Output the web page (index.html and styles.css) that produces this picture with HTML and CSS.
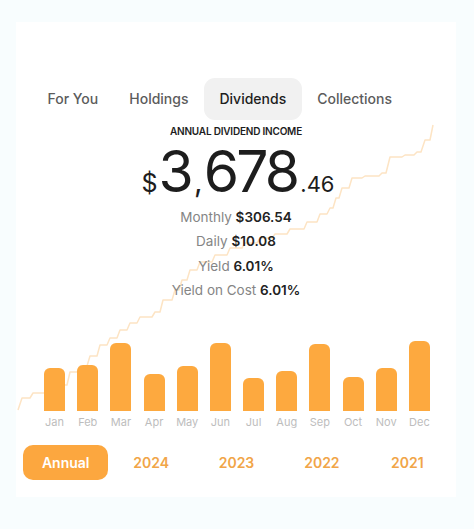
FILE: index.html
```html
<!DOCTYPE html>
<html lang="en">
<head>
  <meta charset="UTF-8" />
  <meta name="viewport" content="width=device-width, initial-scale=1.0"/>
  <title>Dividends</title>
  <link rel="stylesheet" href="styles.css">
</head>
<body>
  <div class="card">
    <!-- cumulative income step line, drawn behind everything -->
    <svg class="trend" viewBox="16 22 440 475" width="440" height="475">
      <polyline points="18,410 22,398 30,398 33,393 44,393 57,393 60,385 67,385 70,372 77,372 80,366 87,366 90,356 97,356 100,345 107,345 110,338 117,338 120,330 127,330 130,323 137,323 140,317 152,317 155,312 160,312 163,300 172,300 175,290 179,290 182,280 187,280 190,270 197,270 200,262 212,262 215,255 227,255 230,248 242,248 245,243 257,243 260,238 272,238 275,234 287,234 290,229 304,229 307,222 317,222 320,214 327,214 330,208 333,208 336,198 339,198 342,188 349,188 352,178 362,178 365,176 379,176 382,173 386,173 390,157 402,157 405,155 414,155 417,152 421,152 425,140 430,140 433,125" />
    </svg>

    <nav class="tabs">
      <span class="tab">For You</span>
      <span class="tab">Holdings</span>
      <span class="tab active">Dividends</span>
      <span class="tab">Collections</span>
    </nav>

    <div class="summary">
      <div class="label">ANNUAL DIVIDEND INCOME</div>
      <div class="total">
        <span class="cur">$</span><span class="whole">3<span class="comma">,</span>678</span><span class="cents">.46</span>
      </div>
      <ul class="stats">
        <li>Monthly <strong>$306.54</strong></li>
        <li>Daily <strong>$10.08</strong></li>
        <li>Yield <strong>6.01%</strong></li>
        <li>Yield on Cost <strong>6.01%</strong></li>
      </ul>
    </div>

    <div class="chart">
      <div class="col"><div class="bar" style="height:43px"></div><span>Jan</span></div>
      <div class="col"><div class="bar" style="height:46px"></div><span>Feb</span></div>
      <div class="col"><div class="bar" style="height:68px"></div><span>Mar</span></div>
      <div class="col"><div class="bar" style="height:37px"></div><span>Apr</span></div>
      <div class="col"><div class="bar" style="height:45px"></div><span>May</span></div>
      <div class="col"><div class="bar" style="height:68px"></div><span>Jun</span></div>
      <div class="col"><div class="bar" style="height:33px"></div><span>Jul</span></div>
      <div class="col"><div class="bar" style="height:40px"></div><span>Aug</span></div>
      <div class="col"><div class="bar" style="height:67px"></div><span>Sep</span></div>
      <div class="col"><div class="bar" style="height:34px"></div><span>Oct</span></div>
      <div class="col"><div class="bar" style="height:43px"></div><span>Nov</span></div>
      <div class="col"><div class="bar" style="height:70px"></div><span>Dec</span></div>
    </div>

    <div class="years">
      <span class="year active">Annual</span>
      <span class="year">2024</span>
      <span class="year">2023</span>
      <span class="year">2022</span>
      <span class="year">2021</span>
    </div>
  </div>
</body>
</html>
```

FILE: styles.css
```css
body {
  font-family: Inter, "Noto Sans", sans-serif;
  background: #f8fdfe;
  margin: 0;
  padding: 22px 18px 0 16px;
  color: #1d1d1d;
}
.card {
  position: relative;
  background: white;
  width: 440px;
  height: 475px;
  padding-top: 56px;
  box-sizing: border-box;
}
.trend {
  position: absolute;
  left: 0;
  top: 0;
}
.trend polyline {
  fill: none;
  stroke: #fde4c4;
  stroke-width: 1.5;
  stroke-linejoin: round;
}
.tabs {
  position: relative;
  display: flex;
  padding-left: 16px;
}
.tab {
  font-size: 14px;
  font-weight: 500;
  color: #5c5c5c;
  padding: 0 15.5px;
  height: 42px;
  line-height: 42px;
  border-radius: 11px;
}
.tab.active {
  background: #f1f1f1;
  color: #1d1d1d;
}
.summary {
  position: relative;
  text-align: center;
}
.label {
  font-size: 10px;
  font-weight: 600;
  letter-spacing: -0.2px;
  margin-top: 5px;
  line-height: 12px;
}
.total {
  display: flex;
  justify-content: center;
  align-items: baseline;
  height: 50px;
  line-height: 50px;
  margin-top: 10px;
  padding-left: 4px;
}
.cur {
  font-size: 25px;
  margin-right: 1px;
}
.whole {
  font-size: 57px;
  letter-spacing: -2.8px;
}
.comma {
  font-size: 30px;
  letter-spacing: 0;
  margin: 0 1px 0 3px;
}
.cents {
  font-size: 22px;
  margin-left: 3px;
}
.stats {
  list-style: none;
  margin: 8px 0 0;
  padding: 0;
}
.stats li {
  font-size: 13.5px;
  line-height: 24.4px;
  color: #858585;
}
.stats strong {
  color: #222;
  font-weight: 600;
}
.chart {
  position: relative;
  display: grid;
  grid-template-columns: repeat(12, 1fr);
  width: 398px;
  margin: 38px 0 0 22px;
  height: 84px;
}
.col {
  display: flex;
  flex-direction: column;
  align-items: center;
  justify-content: flex-end;
}
.bar {
  width: 21px;
  background: #fda93f;
  border-radius: 6px 6px 0 0;
}
.col span {
  font-size: 11px;
  color: #bdbdbd;
  line-height: 11px;
  margin-top: 6px;
  height: 11px;
}
.years {
  position: relative;
  display: grid;
  grid-template-columns: repeat(5, 1fr);
  width: 427px;
  margin: 20px 0 0 7px;
}
.year {
  font-size: 14px;
  font-weight: 600;
  color: #f1a548;
  text-align: center;
  height: 35px;
  line-height: 35px;
  border-radius: 10px;
}
.year.active {
  background: #fca73f;
  color: white;
}
```
